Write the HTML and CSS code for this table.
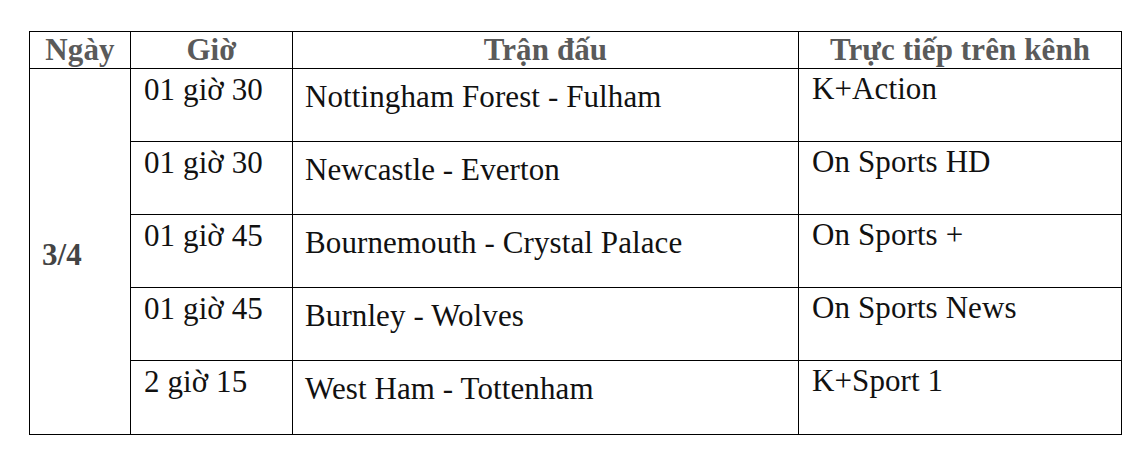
FILE: index.html
```html
<!DOCTYPE html>
<html lang="vi">
<head>
<meta charset="utf-8">
<title>Lịch thi đấu</title>
<link rel="stylesheet" href="styles.css">
</head>
<body>
<div class="page">
<table class="schedule">
  <colgroup>
    <col class="c-date">
    <col class="c-time">
    <col class="c-match">
    <col class="c-channel">
  </colgroup>
  <thead>
    <tr>
      <th>Ngày</th>
      <th>Giờ</th>
      <th>Trận đấu</th>
      <th>Trực tiếp trên kênh</th>
    </tr>
  </thead>
  <tbody>
    <tr>
      <td class="date" rowspan="5">3/4</td>
      <td class="time">01 giờ 30</td>
      <td class="match">Nottingham Forest - Fulham</td>
      <td class="channel">K+Action</td>
    </tr>
    <tr>
      <td class="time">01 giờ 30</td>
      <td class="match">Newcastle - Everton</td>
      <td class="channel">On Sports HD</td>
    </tr>
    <tr>
      <td class="time">01 giờ 45</td>
      <td class="match">Bournemouth - Crystal Palace</td>
      <td class="channel">On Sports +</td>
    </tr>
    <tr>
      <td class="time">01 giờ 45</td>
      <td class="match">Burnley - Wolves</td>
      <td class="channel">On Sports News</td>
    </tr>
    <tr class="last">
      <td class="time">2 giờ 15</td>
      <td class="match">West Ham - Tottenham</td>
      <td class="channel">K+Sport 1</td>
    </tr>
  </tbody>
</table>
</div>
</body>
</html>
```

FILE: styles.css
```css
html, body {
  margin: 0;
  padding: 0;
  background: #ffffff;
}

.page {
  padding: 31px 0 0 29px;
}

.schedule {
  border-collapse: collapse;
  table-layout: fixed;
  width: 1092px;
  font-family: "Liberation Serif", "Times New Roman", serif;
  font-size: 31px;
  line-height: 1.15;
  letter-spacing: 0.1px;
  color: #111111;
}

.c-date { width: 101px; }
.c-time { width: 162px; }
.c-match { width: 506px; }
.c-channel { width: 323px; }

.schedule th,
.schedule td {
  box-sizing: border-box;
  border: 1px solid #000000;
  padding: 0 12px;
}

.schedule th {
  height: 37px;
  font-weight: bold;
  color: #5a5a5a;
  text-align: center;
  vertical-align: middle;
  padding: 0;
}

.schedule td {
  height: 73px;
  vertical-align: top;
  text-align: left;
  white-space: nowrap;
}

.schedule tr.last td {
  height: 74px;
}

.schedule td.date {
  vertical-align: middle;
  font-weight: bold;
  color: #444444;
  padding-top: 6px;
}

.schedule td.time {
  padding-top: 3px;
  padding-left: 13px;
}

.schedule td.match {
  padding-top: 10px;
}

.schedule td.channel {
  padding-top: 2px;
  padding-left: 13px;
}
```
